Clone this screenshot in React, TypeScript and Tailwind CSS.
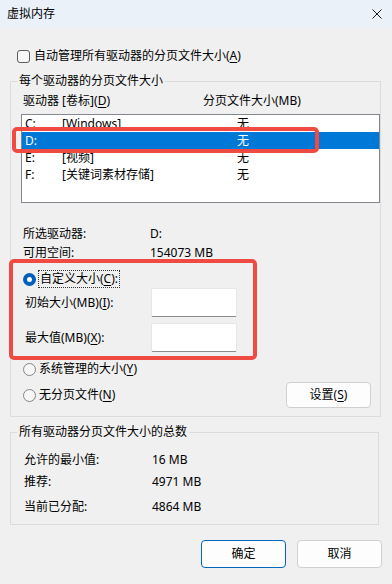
import React from 'react';

const font = { fontFamily: '"Noto Sans", "Noto Sans CJK SC", sans-serif' };

function Key({ k }: { k: string }) {
  return <span className="underline underline-offset-[2px] decoration-[1px]">{k}</span>;
}

function Radio({ checked }: { checked?: boolean }) {
  if (checked) {
    return (
      <span className="w-[13px] h-[13px] rounded-full bg-[#005fb8] flex items-center justify-center shrink-0">
        <span className="w-[5px] h-[5px] rounded-full bg-white" />
      </span>
    );
  }
  return <span className="w-[13px] h-[13px] rounded-full border border-[#858585] bg-[#f7f7f7] shrink-0" />;
}

const drives = [
  { d: 'C:', label: '[Windows]', size: '无' },
  { d: 'D:', label: '', size: '无', selected: true },
  { d: 'E:', label: '[视频]', size: '无' },
  { d: 'F:', label: '[关键词素材存储]', size: '无' },
];

export default function App() {
  return (
    <div className="relative w-[392px] h-[584px] overflow-hidden bg-[#f0f0f0] text-[12px] leading-[16px] text-black" style={font}>
      {/* Title bar */}
      <div className="h-[28px] bg-[#eaf1f8] flex items-center pl-[7px] pr-[10px]">
        <span className="flex-1">虚拟内存</span>
        <svg width="10" height="10" viewBox="0 0 10 10">
          <path d="M0.5 0.5 L9.5 9.5 M9.5 0.5 L0.5 9.5" stroke="#1a1a1a" strokeWidth="1" />
        </svg>
      </div>

      <div className="px-[10px]">
        {/* Auto manage */}
        <div className="mt-[20px] h-[16px] flex items-center pl-[7px]">
          <span className="w-[13px] h-[13px] rounded-[3px] border border-[#5c5c5c] bg-[#f7f7f7]" />
          <span className="ml-[4px]">自动管理所有驱动器的分页文件大小(<Key k="A" />)</span>
        </div>

        {/* Per drive */}
        <fieldset className="mt-[9px] w-[369px] border border-[#dcdcdc] pb-[8px]">
          <legend className="ml-[6px] px-[2px] leading-[16px]">每个驱动器的分页文件大小</legend>
          <div className="mt-[4px] flex pl-[12px]">
            <span className="w-[180px]">驱动器 [卷标](<Key k="D" />)</span>
            <span>分页文件大小(MB)</span>
          </div>
          <div className="mt-[5px] ml-[10px] w-[359px] h-[89px] border border-[#828790] bg-white">
            {drives.map((r) => (
              <div
                key={r.d}
                className={`h-[17px] flex items-center pl-[3px] ${r.selected ? 'bg-[#0078d7] text-white' : ''}`}
              >
                <span className="w-[37px]">{r.d}</span>
                <span className="w-[175px]">{r.label}</span>
                <span>{r.size}</span>
              </div>
            ))}
          </div>

          <div className="mt-[21px] h-[19px] flex items-center pl-[12px]">
            <span className="w-[127px]">所选驱动器:</span>
            <span>D:</span>
          </div>
          <div className="h-[19px] flex items-center pl-[12px]">
            <span className="w-[127px]">可用空间:</span>
            <span>154073 MB</span>
          </div>

          <div className="mt-[8px] h-[18px] flex items-center pl-[12px]">
            <Radio checked />
            <span className="ml-[2px] border border-dotted border-[#333] px-[1px] leading-[16px]">
              自定义大小(<Key k="C" />):
            </span>
          </div>
          <div className="flex items-center pl-[14px]">
            <span className="w-[126px]">初始大小(MB)(<Key k="I" />):</span>
            <span className="w-[86px] h-[29px] bg-white rounded-[2px] border border-[#e6e6e6] border-b-[#8a8a8a]" />
          </div>
          <div className="mt-[6px] flex items-center pl-[14px]">
            <span className="w-[126px]">最大值(MB)(<Key k="X" />):</span>
            <span className="w-[86px] h-[29px] bg-white rounded-[2px] border border-[#e6e6e6] border-b-[#8a8a8a]" />
          </div>

          <div className="mt-[8px] h-[18px] flex items-center pl-[12px]">
            <Radio />
            <span className="ml-[3px]">系统管理的大小(<Key k="Y" />)</span>
          </div>
          <div className="mt-[4px] h-[26px] flex items-center pl-[12px] pr-[9px]">
            <Radio />
            <span className="ml-[3px]">无分页文件(<Key k="N" />)</span>
            <button className="ml-auto w-[85px] h-[26px] rounded-[4px] border border-[#d0d0d0] bg-[#fdfdfd]">
              设置(<Key k="S" />)
            </button>
          </div>
        </fieldset>

        {/* Totals */}
        <fieldset className="mt-[7px] w-[369px] border border-[#dcdcdc] pb-[9px]">
          <legend className="ml-[6px] px-[2px] leading-[16px]">所有驱动器分页文件大小的总数</legend>
          <div className="mt-[12px] flex pl-[13px]">
            <span className="w-[128px]">允许的最小值:</span>
            <span>16 MB</span>
          </div>
          <div className="mt-[6px] flex pl-[13px]">
            <span className="w-[128px]">推荐:</span>
            <span>4971 MB</span>
          </div>
          <div className="mt-[9px] flex pl-[13px]">
            <span className="w-[128px]">当前已分配:</span>
            <span>4864 MB</span>
          </div>
        </fieldset>

        <div className="mt-[15px] flex justify-end gap-[11px]">
          <button className="w-[85px] h-[28px] rounded-[4px] border border-[#0067c0] bg-[#fdfdfd]">确定</button>
          <button className="w-[85px] h-[28px] rounded-[4px] border border-[#d0d0d0] bg-[#fdfdfd]">取消</button>
        </div>
      </div>

      {/* Red annotation boxes */}
      <div className="absolute left-[12px] top-[127px] w-[307px] h-[26px] border-[4px] border-[#ef4b43] rounded-[5px]" />
      <div className="absolute left-[9px] top-[259px] w-[248px] h-[101px] border-[4px] border-[#ef4b43] rounded-[5px]" />
    </div>
  );
}
